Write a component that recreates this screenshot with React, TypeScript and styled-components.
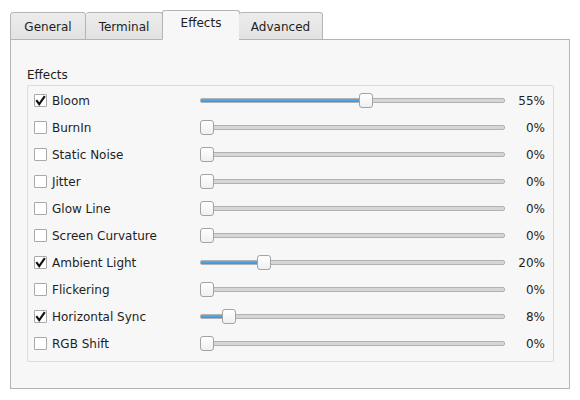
import React from "react";
import styled, { createGlobalStyle } from "styled-components";

const Global = createGlobalStyle`
  html, body { margin: 0; padding: 0; background: #ffffff; }
  body { font-family: "DejaVu Sans", sans-serif; font-size: 12px; color: #1e1e1e; }
`;

const Window = styled.div`
  width: 580px;
  height: 400px;
  box-sizing: border-box;
  padding: 10px 10px 0 10px;
  display: flex;
  flex-direction: column;
`;

const TabBar = styled.div`
  display: flex;
  align-items: flex-end;
  height: 30px;
  position: relative;
  z-index: 1;
  margin-bottom: -1px;
`;

const Tab = styled.div<{ $active?: boolean; $first?: boolean; $w: number }>`
  box-sizing: border-box;
  width: ${(p) => p.$w}px;
  height: ${(p) => (p.$active ? 30 : 28)}px;
  display: flex;
  align-items: center;
  justify-content: center;
  border: 1px solid #b4b4b4;
  border-left: ${(p) => (p.$first || p.$active ? "1px solid #b4b4b4" : "none")};
  border-bottom: ${(p) => (p.$active ? "1px solid #f7f7f7" : "1px solid #b4b4b4")};
  border-radius: 3px 3px 0 0;
  background: ${(p) => (p.$active ? "#f7f7f7" : "linear-gradient(#ececec, #e2e2e2)")};
  color: #1e1e1e;
  ${(p) =>
    p.$active
      ? "margin-left: -1px; margin-right: -1px; padding-bottom: 4px;"
      : "padding-top: 2px;"}
`;

const Pane = styled.div`
  box-sizing: border-box;
  width: 560px;
  height: 350px;
  border: 1px solid #b4b4b4;
  background: #f7f7f7;
  padding: 26px 15px 0 16px;
`;

const GroupTitle = styled.div`
  height: 19px;
  line-height: 19px;
`;

const Group = styled.div`
  box-sizing: border-box;
  width: 527px;
  height: 277px;
  border: 1px solid #dcdcdc;
  border-radius: 2px;
  background: #f7f7f7;
  padding: 1px 8px 0 6px;
  display: flex;
  flex-direction: column;
`;

const Row = styled.div`
  display: grid;
  grid-template-columns: 166px 305px 40px;
  align-items: center;
  height: 27px;
`;

const CheckLabel = styled.label`
  display: flex;
  align-items: center;
  gap: 5px;
`;

const Box = styled.span`
  box-sizing: border-box;
  width: 13px;
  height: 13px;
  border: 1px solid #a9a9a9;
  border-radius: 1px;
  background: #ffffff;
  display: flex;
  align-items: center;
  justify-content: center;
`;

const Slider = styled.div`
  position: relative;
  height: 16px;
  display: flex;
  align-items: center;
`;

const Groove = styled.div`
  box-sizing: border-box;
  width: 100%;
  height: 5px;
  border: 1px solid #b2b2b2;
  border-radius: 2px;
  background: #d6d6d6;
  overflow: hidden;
  position: relative;
`;

const Fill = styled.div`
  position: absolute;
  left: -1px;
  top: -1px;
  bottom: -1px;
  border: 1px solid #2a6a9c;
  border-radius: 2px;
  background: linear-gradient(#55b0ee, #3597e2);
`;

const Handle = styled.div`
  position: absolute;
  top: 0;
  box-sizing: border-box;
  width: 14px;
  height: 15px;
  border: 1px solid #a3a3a3;
  border-radius: 3px;
  background: linear-gradient(#ffffff, #f0f0f0);
`;

const Value = styled.div`
  text-align: right;
`;

const effects: [string, number, boolean][] = [
  ["Bloom", 55, true],
  ["BurnIn", 0, false],
  ["Static Noise", 0, false],
  ["Jitter", 0, false],
  ["Glow Line", 0, false],
  ["Screen Curvature", 0, false],
  ["Ambient Light", 20, true],
  ["Flickering", 0, false],
  ["Horizontal Sync", 8, true],
  ["RGB Shift", 0, false],
];

const Check = () => (
  <svg width="11" height="11" viewBox="0 0 11 11">
    <path d="M1.3 5.2 L4.2 9.2 L9.8 1.2" fill="none" stroke="#111" strokeWidth="2.1" strokeLinejoin="miter" />
  </svg>
);

const SLIDER_W = 305;
const HANDLE_W = 14;

export default function App() {
  return (
    <>
      <Global />
      <Window>
        <TabBar>
          <Tab $first $w={76}>General</Tab>
          <Tab $w={77}>Terminal</Tab>
          <Tab $active $w={78}>Effects</Tab>
          <Tab $w={84}>Advanced</Tab>
        </TabBar>
        <Pane>
          <GroupTitle>Effects</GroupTitle>
          <Group>
            {effects.map(([name, v, on]) => {
              const x = Math.round(((SLIDER_W - HANDLE_W) * v) / 100) - 1;
              const left = Math.max(0, x);
              return (
                <Row key={name}>
                  <CheckLabel>
                    <Box>{on && <Check />}</Box>
                    {name}
                  </CheckLabel>
                  <Slider>
                    <Groove>
                      {v > 0 && <Fill style={{ width: left + 4 }} />}
                    </Groove>
                    <Handle style={{ left }} />
                  </Slider>
                  <Value>{v}%</Value>
                </Row>
              );
            })}
          </Group>
        </Pane>
      </Window>
    </>
  );
}
